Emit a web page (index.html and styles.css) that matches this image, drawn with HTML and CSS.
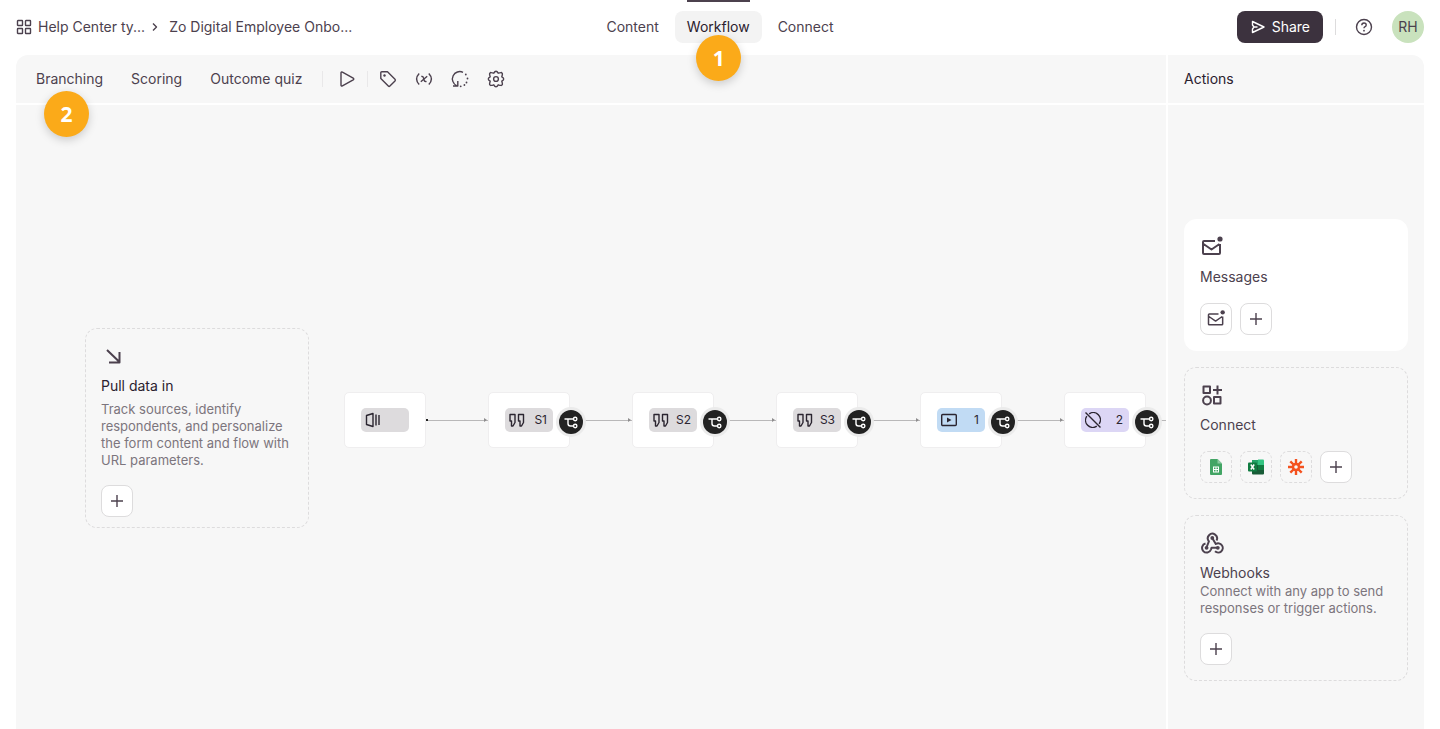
FILE: index.html
```html
<!DOCTYPE html>
<html lang="en">
<head>
    <meta charset="UTF-8">
    <meta name="viewport" content="width=device-width, initial-scale=1.0">
    <title>Workflow - Zo Digital Employee Onboarding</title>
    <link rel="stylesheet" href="styles.css">
</head>
<body>
    <!-- shared icons -->
    <svg class="sprite" aria-hidden="true">
        <symbol id="plus" viewBox="0 0 16 16">
            <path d="M8 2v12M2 8h12"/>
        </symbol>
        <symbol id="mail" viewBox="0 0 24 24">
            <path d="M15 6H4Q3 6 3 7V18Q3 19 4 19H19Q20 19 20 18V9M3.500 9l8 5.500L19.500 9"/>
            <circle class="solid" cx="20" cy="4" r="2.600"/>
        </symbol>
        <symbol id="quotes" viewBox="0 0 16 16">
            <path d="M1 2.500h5v8L4 14H2.500V9H1zM9.500 2.500h5v8l-2 3.500H11V9H9.500z"/>
        </symbol>
        <symbol id="branch" viewBox="0 0 16 16">
            <path d="M1.500 5h9M5 5v4.500Q5 12 7.500 12h3"/>
            <circle cx="12.200" cy="5" r="1.700"/>
            <circle cx="12.200" cy="12" r="1.700"/>
        </symbol>
    </svg>

    <header class="header">
        <div class="breadcrumb">
            <svg class="icon-16" viewBox="0 0 16 16"><rect x="1.500" y="1.500" width="5" height="5" rx="0.500"/><rect x="9.500" y="1.500" width="5" height="5" rx="0.500"/><rect x="1.500" y="9.500" width="5" height="5" rx="0.500"/><rect x="9.500" y="9.500" width="5" height="5" rx="0.500"/></svg>
            <a href="#">Help Center ty...</a>
            <svg class="chevron" viewBox="0 0 8 10"><path d="M2 1.500L5.500 5 2 8.500"/></svg>
            <a href="#">Zo Digital Employee Onbo...</a>
        </div>
        <nav class="tabs">
            <a class="tab" href="#">Content</a>
            <a class="tab active" href="#">Workflow<span class="step">1</span></a>
            <a class="tab" href="#">Connect</a>
        </nav>
        <div class="account">
            <button class="share" type="button">
                <svg class="icon-16" viewBox="0 0 16 16"><path d="M2.500 6V2.500L14 8 2.500 13.500V10L4 8zM4 8h3.500"/></svg>
                Share
            </button>
            <span class="divider"></span>
            <button class="help" type="button" aria-label="Help">
                <svg class="icon-18" viewBox="0 0 18 18"><circle cx="9" cy="9" r="7.500"/><path d="M6.800 7.200Q6.800 5 9 5t2.200 2Q11.200 8.200 9.800 8.800 9 9.200 9 10.300"/><circle class="solid" cx="9" cy="12.700" r="0.900"/></svg>
            </button>
            <button class="avatar" type="button">RH</button>
        </div>
    </header>

    <main class="workspace">
        <div class="toolbar">
            <span class="tool-anchor"><button class="tool-text" type="button">Branching</button><span class="step">2</span></span>
            <button class="tool-text" type="button">Scoring</button>
            <button class="tool-text" type="button">Outcome quiz</button>
            <span class="divider"></span>
            <button class="tool play" type="button" aria-label="Play">
                <svg class="icon-18" viewBox="0 0 18 18"><path d="M3 3Q3 1.600 4.400 2.200L15.200 8.200Q16.400 9 15.200 9.800L4.400 15.800Q3 16.400 3 15z"/></svg>
            </button>
            <span class="divider"></span>
            <button class="tool" type="button" aria-label="Tags">
                <svg class="icon-18" viewBox="0 0 18 18"><path d="M1.800 2.800Q1.800 1.800 2.800 1.800H8.500L16 9.300Q16.800 10.100 16 10.900L10.900 16Q10.100 16.800 9.300 16L1.800 8.500z"/><circle class="solid" cx="5.500" cy="5.500" r="1.200"/></svg>
            </button>
            <button class="tool" type="button" aria-label="Variables">
                <svg class="icon-18" viewBox="0 0 18 18"><path d="M4.200 3.500Q-1 9 4.200 14.500M13.800 3.500Q19 9 13.800 14.500M6.300 6.500Q8 6 8.500 8L9.300 10.500Q9.800 12 11.500 11.300M12.200 6.300L5.800 11.700"/></svg>
            </button>
            <button class="tool" type="button" aria-label="Reset">
                <svg class="icon-18" viewBox="0 0 18 18"><path d="M12 2.300A7.200 7.200 0 0 0 5.600 15.600M2 16h4.800V11"/><g class="solid"><circle cx="14.800" cy="4.500" r="0.900"/><circle cx="16.500" cy="8.500" r="0.900"/><circle cx="15.500" cy="12.500" r="0.900"/><circle cx="13.400" cy="15" r="0.900"/><circle cx="9.700" cy="16.300" r="0.900"/></g></svg>
            </button>
            <button class="tool" type="button" aria-label="Settings">
                <svg class="icon-18" viewBox="0 0 18 18"><path d="M9 1.300Q10.200 1.300 11.200 3.200 14.800 2 14.900 3.100 16 3.200 14.800 6.800 16.700 7.800 16.700 9T14.800 11.200Q16 14.800 14.900 14.900 14.800 16 11.200 14.800 10.200 16.700 9 16.700T6.800 14.800Q3.200 16 3.100 14.900 2 14.800 3.200 11.200 1.300 10.200 1.300 9T3.200 6.800Q2 3.200 3.100 3.100 3.200 2 6.800 3.200 7.800 1.300 9 1.300z"/><circle cx="9" cy="9" r="2.400"/></svg>
            </button>
        </div>
        <h2 class="panel-title">Actions</h2>

        <section class="canvas">
            <div class="card pull">
                <svg class="icon-24" viewBox="0 0 24 24"><path d="M6 6l12.500 12M8 18.500h10.500V8"/></svg>
                <h3>Pull data in</h3>
                <p>Track sources, identify respondents, and personalize the form content and flow with URL parameters.</p>
                <div class="buttons">
                    <button class="square" type="button" aria-label="Add data source"><svg class="icon-16"><use href="#plus"/></svg></button>
                </div>
            </div>
            <div class="flow">
                <div class="node">
                    <span class="tag"><svg class="icon-16" viewBox="0 0 16 16"><path d="M1.500 3.500L8 1.500v13L1.500 12.500zM11 2.500v11M14 3v10"/></svg></span>
                </div>
                <span class="link start"></span>
                <div class="node">
                    <span class="tag"><svg class="icon-16"><use href="#quotes"/></svg>S1</span>
                    <button class="branch" type="button" aria-label="Branching for S1"><svg class="icon-16"><use href="#branch"/></svg></button>
                </div>
                <span class="link"></span>
                <div class="node">
                    <span class="tag"><svg class="icon-16"><use href="#quotes"/></svg>S2</span>
                    <button class="branch" type="button" aria-label="Branching for S2"><svg class="icon-16"><use href="#branch"/></svg></button>
                </div>
                <span class="link"></span>
                <div class="node">
                    <span class="tag"><svg class="icon-16"><use href="#quotes"/></svg>S3</span>
                    <button class="branch" type="button" aria-label="Branching for S3"><svg class="icon-16"><use href="#branch"/></svg></button>
                </div>
                <span class="link"></span>
                <div class="node">
                    <span class="tag blue"><svg class="icon-16" viewBox="0 0 16 16"><rect x="0.700" y="2.500" width="14.600" height="11" rx="1"/><path class="solid" d="M6 5.500L10.500 8 6 10.500z"/></svg>1</span>
                    <button class="branch" type="button" aria-label="Branching for question 1"><svg class="icon-16"><use href="#branch"/></svg></button>
                </div>
                <span class="link"></span>
                <div class="node">
                    <span class="tag purple"><svg class="icon-16" viewBox="0 0 16 16"><path d="M0.500 0.500l15 15M4.200 1.800A7.200 7.200 0 0 1 14.200 11.800M11.800 14.200A7.200 7.200 0 0 1 1.800 4.200"/></svg>2</span>
                    <button class="branch" type="button" aria-label="Branching for question 2"><svg class="icon-16"><use href="#branch"/></svg></button>
                </div>
                <span class="link"></span>
            </div>
        </section>

        <aside class="actions">
            <div class="card filled">
                <svg class="icon-24"><use href="#mail"/></svg>
                <h3>Messages</h3>
                <div class="buttons">
                    <button class="square" type="button" aria-label="Email"><svg class="icon-20"><use href="#mail"/></svg></button>
                    <button class="square" type="button" aria-label="Add message"><svg class="icon-16"><use href="#plus"/></svg></button>
                </div>
            </div>
            <div class="card">
                <svg class="icon-24" viewBox="0 0 24 24"><rect x="3.500" y="3.500" width="6.500" height="6.500"/><path d="M17.500 2.500v9M13 7h9"/><circle cx="7" cy="17.500" r="3.900"/><rect x="14" y="14" width="6.500" height="6.500"/></svg>
                <h3>Connect</h3>
                <div class="buttons">
                    <button class="square dashed" type="button" aria-label="Google Sheets">
                        <svg class="logo" viewBox="0 0 16 16"><path fill="#43a565" d="M3 0h6.500L14 4.500V15q0 1-1 1H3q-1 0-1-1V1q0-1 1-1z"/><path fill="#8cc9a1" d="M9.500 0L14 4.500H9.500z"/><path fill="#fff" d="M5 7.500h6v6H5z"/><path fill="#43a565" d="M6 8.500h1.500v1.500H6zM8.500 8.500H10v1.500H8.500zM6 11h1.500v1.500H6zM8.500 11H10v1.500H8.500z"/></svg>
                    </button>
                    <button class="square dashed" type="button" aria-label="Excel">
                        <svg class="logo" viewBox="0 0 16 16"><path fill="#21a366" d="M4 1h6v5H4z"/><path fill="#33c481" d="M10 .5h5q1 0 1 1V6h-6z"/><path fill="#107c41" d="M10 6h6v5h-6z"/><path fill="#185c37" d="M4 6h6v5h6v3.500q0 1-1 1H5q-1 0-1-1z"/><rect fill="#107c41" y="3.500" width="9" height="9" rx="1"/><path class="cross" d="M2.800 5.500l3.400 5M6.200 5.500l-3.400 5"/></svg>
                    </button>
                    <button class="square dashed" type="button" aria-label="Zapier">
                        <svg class="logo zapier" viewBox="0 0 16 16"><path d="M8 0v5.500M8 10.500V16M0 8h5.500M10.500 8H16M2.300 2.300L6 6M10 10l3.700 3.700M13.700 2.300L10 6M6 10l-3.700 3.700"/><circle cx="8" cy="8" r="3"/></svg>
                    </button>
                    <button class="square" type="button" aria-label="Add connection"><svg class="icon-16"><use href="#plus"/></svg></button>
                </div>
            </div>
            <div class="card">
                <svg class="icon-24" viewBox="0 0 24 24"><path d="M16.500 9.500A4.600 4.600 0 1 0 8.900 10.300L6.500 16.500M5.500 12.500A4.600 4.600 0 1 0 11 18.500L11.500 16.800H17.500M15 20.300A4.600 4.600 0 1 0 15.800 13L12.500 7.500"/><g class="solid"><circle cx="12.300" cy="7" r="1.900"/><circle cx="6.600" cy="16.800" r="1.900"/><circle cx="17.800" cy="16.800" r="1.900"/></g></svg>
                <h3>Webhooks</h3>
                <p>Connect with any app to send responses or trigger actions.</p>
                <div class="buttons">
                    <button class="square" type="button" aria-label="Add webhook"><svg class="icon-16"><use href="#plus"/></svg></button>
                </div>
            </div>
        </aside>
    </main>
</body>
</html>
```
FILE: styles.css
```css
* {
    box-sizing: border-box;
}

body {
    display: flex;
    flex-direction: column;
    min-height: 100vh;
    margin: 0;
    background: white;
    color: #4c414e;
    font-family: Inter, 'Liberation Sans', sans-serif;
    font-size: 14px;
    line-height: 20px;
}

a {
    color: inherit;
    text-decoration: none;
}

button {
    padding: 0;
    border: none;
    background: none;
    color: inherit;
    font: inherit;
    cursor: pointer;
}

h2,
h3,
p {
    margin: 0;
    font-size: 14px;
    font-weight: 400;
}

/* icons */
svg {
    display: block;
    flex: none;
    fill: none;
    stroke: currentColor;
    stroke-width: 1.4;
    stroke-linejoin: round;
}

.sprite {
    position: absolute;
    width: 0;
    height: 0;
}

.solid {
    fill: currentColor;
    stroke: none;
}

.icon-16 {
    width: 16px;
    height: 16px;
}

.icon-18 {
    width: 18px;
    height: 18px;
}

.icon-20 {
    width: 20px;
    height: 20px;
    stroke-width: 1.8;
}

.icon-24 {
    width: 24px;
    height: 24px;
    stroke-width: 2;
}

.logo {
    width: 16px;
    height: 16px;
    stroke: none;
}

.cross {
    stroke: white;
}

.zapier {
    stroke: #f4511e;
    stroke-width: 2.4;
}

/* header */
.header {
    display: grid;
    grid-template-columns: 1fr auto 1fr;
    align-items: center;
    height: 55px;
    padding: 0 16px 2px;
}

.breadcrumb {
    display: flex;
    align-items: center;
    gap: 6px;
}

.chevron {
    width: 8px;
    height: 10px;
    margin-right: 4px;
}

.tabs {
    display: flex;
    gap: 4px;
}

.tab {
    position: relative;
    padding: 6px 12px;
    border-radius: 8px;
}

.tab.active {
    background: #f3f3f3;
    color: #2b212e;
}

.tab.active::before {
    content: '';
    position: absolute;
    top: -11px;
    left: 12px;
    right: 12px;
    height: 2px;
    background: #4c414e;
}

.step {
    position: absolute;
    z-index: 1;
    top: 24px;
    left: 50%;
    width: 45px;
    height: 46px;
    margin-left: -22px;
    border-radius: 50%;
    background: #fbaa19;
    box-shadow: 0 3px 10px rgba(0, 0, 0, 0.18);
    color: white;
    font: 700 21px/46px 'Open Sans', sans-serif;
    text-align: center;
}

.account {
    display: flex;
    justify-content: flex-end;
    align-items: center;
}

.share {
    display: flex;
    align-items: center;
    gap: 6px;
    height: 32px;
    padding: 0 13px;
    border-radius: 8px;
    background: #3c323e;
    color: white;
}

.divider {
    width: 1px;
    height: 16px;
    background: #dddcdd;
}

.account .divider {
    margin: 0 12px;
}

.help {
    padding: 7px;
}

.avatar {
    width: 32px;
    height: 32px;
    margin-left: 12px;
    border-radius: 50%;
    background: #c9e2bd;
}

/* workspace */
.workspace {
    display: grid;
    flex: 1;
    grid-template-columns: minmax(0, 1fr) 256px;
    grid-template-rows: 48px 1fr;
    gap: 2px;
    margin: 0 16px;
}

.toolbar,
.panel-title,
.canvas,
.actions {
    background: #f7f7f7;
}

.toolbar {
    display: flex;
    align-items: center;
    padding: 0 20px;
    border-top-left-radius: 12px;
}

.toolbar .divider {
    background: #e9e8e9;
}

.tool-anchor {
    position: relative;
}

.tool-anchor .step {
    top: 22px;
    left: 30px;
}

.tool-text {
    margin-right: 28px;
}

.toolbar .tool-text + .divider {
    margin-left: -8px;
}

.tool {
    padding: 9px;
}

.play {
    margin: 0 2px 0 6px;
}

.play + .divider {
    margin-right: 2px;
}

.panel-title {
    padding: 14px 16px;
    border-top-right-radius: 12px;
    color: #2b212e;
}

.canvas {
    display: flex;
    align-items: center;
    padding: 22px 0 0 69px;
    overflow: hidden;
}

/* cards */
.card {
    width: 224px;
    padding: 15px;
    border: 1px dashed #dddcdd;
    border-radius: 12px;
}

.card.filled {
    border: 1px solid white;
    background: white;
}

.card h3 {
    margin-top: 8px;
}

.card p {
    color: #7c757d;
    font-size: 13px;
    line-height: 17px;
}

.buttons {
    display: flex;
    gap: 8px;
    margin-top: 16px;
}

.square {
    display: grid;
    place-items: center;
    width: 32px;
    height: 32px;
    border: 1px solid #dddcdd;
    border-radius: 8px;
    background: white;
}

.square.dashed {
    border-style: dashed;
    background: none;
}

.pull {
    flex: none;
    padding-bottom: 10px;
}

.pull h3 {
    color: #2b212e;
}

.pull p {
    margin-top: 5px;
}

.actions {
    display: flex;
    flex-direction: column;
    gap: 16px;
    padding: 114px 16px 16px;
}

/* flow */
.flow {
    display: flex;
    align-items: center;
    margin: 0 0 16px 35px;
}

.node {
    position: relative;
    flex: none;
    width: 82px;
    padding: 15px;
    border: 1px solid #efeeef;
    border-radius: 5px;
    background: white;
}

.tag {
    display: flex;
    justify-content: space-between;
    align-items: center;
    width: 48px;
    height: 24px;
    margin: 0 auto;
    padding: 0 6px 0 4px;
    border-radius: 5px;
    background: #dddbdd;
    color: #2b2530;
    font-size: 12px;
}

.tag.blue {
    background: #c1dbf4;
}

.tag.purple {
    background: #dcd6f5;
}

.branch {
    position: absolute;
    z-index: 1;
    top: 17px;
    right: -14px;
    display: grid;
    place-items: center;
    width: 24px;
    height: 24px;
    border-radius: 50%;
    background: #222;
    box-shadow: 0 0 0 3px #ebebeb;
    color: white;
}

.link {
    position: relative;
    flex: none;
    width: 62px;
    height: 1px;
    background: #b9b8b9;
}

.link::after {
    content: '';
    position: absolute;
    top: -2px;
    right: 1px;
    border-left: 3px solid #8e8d8e;
    border-top: 2px solid transparent;
    border-bottom: 2px solid transparent;
}

.link.start::before {
    content: '';
    position: absolute;
    top: -1px;
    left: 0;
    width: 2px;
    height: 2px;
    background: #222;
}
```
